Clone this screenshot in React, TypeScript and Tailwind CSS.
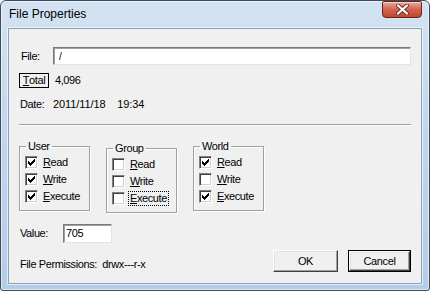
import React from "react";

const ui = "font-['Liberation_Sans',Arial,sans-serif] text-[11px] leading-[13px] tracking-[-0.4px] text-black";

// classic 7x7 check mark, drawn pixel by pixel
const CHECK: [number, number][] = [
  [6, 0],
  [5, 1], [6, 1],
  [0, 2], [4, 2], [5, 2], [6, 2],
  [0, 3], [1, 3], [3, 3], [4, 3], [5, 3],
  [0, 4], [1, 4], [2, 4], [3, 4], [4, 4],
  [1, 5], [2, 5], [3, 5],
  [2, 6],
];

function Box({ checked }: { checked: boolean }) {
  return (
    <span className="relative block w-[13px] h-[13px] shrink-0 bg-white border border-t-[#808080] border-l-[#808080] border-b-white border-r-white shadow-[inset_1px_1px_0_#404040,inset_-1px_-1px_0_#d4d0c8]">
      {checked && (
        <svg className="absolute left-[2px] top-[2px]" width="7" height="7" viewBox="0 0 7 7" shapeRendering="crispEdges">
          {CHECK.map(([x, y]) => (
            <rect key={`${x}-${y}`} x={x} y={y} width="1" height="1" fill="#000" />
          ))}
        </svg>
      )}
    </span>
  );
}

function Mnemonic({ text }: { text: string }) {
  return (
    <>
      <span className="underline underline-offset-[1px]">{text[0]}</span>
      {text.slice(1)}
    </>
  );
}

function CheckRow({ label, checked, focus }: { label: string; checked: boolean; focus?: boolean }) {
  return (
    <div className="flex items-center gap-[5px] h-[17px]">
      <Box checked={checked} />
      <span className={focus ? "outline outline-1 outline-dotted outline-black px-[1px] -ml-[1px]" : ""}>
        <Mnemonic text={label} />
      </span>
    </div>
  );
}

function Group({ title, perms, focusLast, className = "" }: { title: string; perms: boolean[]; focusLast?: boolean; className?: string }) {
  return (
    <fieldset
      className={`w-[71px] h-[71px] border border-[#a0a0a0] shadow-[inset_1px_1px_0_#fff,1px_1px_0_#fff] pl-[5px] pb-[4px] ${className}`}
    >
      <legend className="ml-[1px] pl-[2px] pr-[2px] leading-[13px]">{title}</legend>
      <div className="pt-[1px]">
        <CheckRow label="Read" checked={perms[0]} />
        <CheckRow label="Write" checked={perms[1]} />
        <CheckRow label="Execute" checked={perms[2]} focus={focusLast} />
      </div>
    </fieldset>
  );
}

function Button({ children, isDefault, className = "" }: { children: React.ReactNode; isDefault?: boolean; className?: string }) {
  return (
    <div className={`h-[22px] ${isDefault ? "border border-black" : ""} ${className}`}>
      <div className="h-full w-full flex items-center justify-center bg-[#f0f0f0] border border-t-white border-l-white border-b-[#404040] border-r-[#404040] shadow-[inset_-1px_-1px_0_#a0a0a0,inset_1px_1px_0_#e3e3e3]">
        {children}
      </div>
    </div>
  );
}

function Sunken({ className = "", children }: { className?: string; children?: React.ReactNode }) {
  return (
    <div className={`bg-white border border-t-[#7a7a7a] border-l-[#7a7a7a] border-b-[#e3e3e3] border-r-[#e3e3e3] shadow-[inset_1px_1px_0_#a0a0a0] flex items-center ${className}`}>
      {children}
    </div>
  );
}

export default function App() {
  return (
    <div className="w-[430px] h-[291px] bg-white">
      <div className="w-[430px] h-[291px] flex flex-col rounded-t-[6px] rounded-b-[3px] border border-[#3d4b5a] bg-gradient-to-b from-[#d3e3f3] via-[#bfd5ec] to-[#b4cde8] shadow-[inset_0_0_0_1px_rgba(255,255,255,0.55)] px-[7px] pb-[6px]">
        {/* title bar */}
        <div className="h-[27px] shrink-0 flex items-start justify-between">
          <span className="pl-[1px] pt-[6px] font-['Liberation_Sans',Arial,sans-serif] text-[12px] leading-[15px] text-black">
            File Properties
          </span>
          <div className="w-[40px] h-[17px] flex items-center justify-center rounded-b-[4px] rounded-t-[2px] border border-[#6a2318] bg-gradient-to-b from-[#e9aa9c] via-[#d2644f] to-[#c1452f] shadow-[inset_0_1px_0_rgba(255,255,255,0.5)]">
            <svg width="13" height="11" viewBox="0 0 13 11">
              <path d="M2 1.5 L11 9.5 M11 1.5 L2 9.5" stroke="#6b2a20" strokeWidth="4" strokeLinecap="round" />
              <path d="M2 1.5 L11 9.5 M11 1.5 L2 9.5" stroke="#fff" strokeWidth="2.2" strokeLinecap="round" />
            </svg>
          </div>
        </div>

        {/* client area */}
        <div className={`flex-1 flex flex-col bg-[#f0f0f0] border border-[#8fa3b8] shadow-[0_0_0_1px_rgba(255,255,255,0.6)] pl-[11px] pr-[10px] ${ui}`}>
          <div className="mt-[18px] h-[18px] flex items-center">
            <span className="ml-[1px] w-[32px]">File:</span>
            <Sunken className="flex-1 h-[18px] pl-[5px]">
              <span className="text-[10px]">/</span>
            </Sunken>
          </div>

          <div className="mt-[8px] h-[15px] flex items-center">
            <div className="-ml-[1px] w-[30px] h-[15px] border border-black flex items-center justify-center">
              <Mnemonic text="Total" />
            </div>
            <span className="ml-[6px]">4,096</span>
          </div>

          <div className="mt-[10px] h-[13px] flex items-center">
            <span className="w-[33px]">Date:</span>
            <span className="whitespace-pre tracking-[-0.1px]">2011/11/18    19:34</span>
          </div>

          <div className="mt-[13px] -ml-[1px] h-[2px] border-t border-t-[#a0a0a0] border-b border-b-white" />

          <div className="mt-[14px] -ml-[1px] flex gap-[16px]">
            <Group title="User" perms={[true, true, true]} />
            <Group title="Group" perms={[false, false, false]} focusLast className="mt-[2px]" />
            <Group title="World" perms={[true, false, true]} />
          </div>

          <div className="mt-[11px] flex items-end justify-between">
            <div className="flex flex-col">
              <div className="h-[19px] flex items-center">
                <span className="w-[43px]">Value:</span>
                <Sunken className="w-[49px] h-[19px] pl-[2px]">705</Sunken>
              </div>
              <div className="mt-[15px] h-[13px] whitespace-pre">File Permissions:  drwx---r-x</div>
            </div>
            <div className="flex gap-[10px] -mb-[1px]">
              <Button className="w-[65px]">OK</Button>
              <Button className="w-[63px]" isDefault>
                Cancel
              </Button>
            </div>
          </div>
        </div>
      </div>
    </div>
  );
}
